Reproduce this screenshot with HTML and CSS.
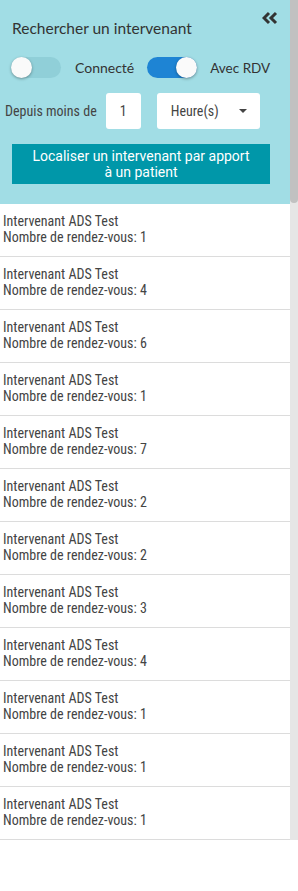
FILE: index.html
```html
<!DOCTYPE html>
<html lang="fr">
<head>
<meta charset="utf-8">
<link rel="stylesheet" href="styles.css">
</head>
<body>
<div class="panel">
  <div class="content">
    <div class="header">
      <div class="title-row">
        <div class="title">Rechercher un intervenant</div>
        <svg class="collapse" width="16" height="14" viewBox="0 0 16 14"><path d="M7 2 L2 7 L7 12 M14 2 L9 7 L14 12" fill="none" stroke="#333" stroke-width="3" stroke-linejoin="miter"/></svg>
      </div>
      <div class="toggle-row">
        <span class="switch"><span class="knob"></span></span>
        <span class="tlabel">Connecté</span>
        <span class="switch on"><span class="knob"></span></span>
        <span class="tlabel">Avec RDV</span>
      </div>
      <div class="since-row">
        <span class="since">Depuis moins de</span>
        <span class="num">1</span>
        <span class="select">Heure(s)<span class="caret"></span></span>
      </div>
      <button class="locate">Localiser un intervenant par apport<br>à un patient</button>
    </div>
    <ul class="list">
      <li><span>Intervenant ADS Test</span><span>Nombre de rendez-vous: 1</span></li>
      <li><span>Intervenant ADS Test</span><span>Nombre de rendez-vous: 4</span></li>
      <li><span>Intervenant ADS Test</span><span>Nombre de rendez-vous: 6</span></li>
      <li><span>Intervenant ADS Test</span><span>Nombre de rendez-vous: 1</span></li>
      <li><span>Intervenant ADS Test</span><span>Nombre de rendez-vous: 7</span></li>
      <li><span>Intervenant ADS Test</span><span>Nombre de rendez-vous: 2</span></li>
      <li><span>Intervenant ADS Test</span><span>Nombre de rendez-vous: 2</span></li>
      <li><span>Intervenant ADS Test</span><span>Nombre de rendez-vous: 3</span></li>
      <li><span>Intervenant ADS Test</span><span>Nombre de rendez-vous: 4</span></li>
      <li><span>Intervenant ADS Test</span><span>Nombre de rendez-vous: 1</span></li>
      <li><span>Intervenant ADS Test</span><span>Nombre de rendez-vous: 1</span></li>
      <li><span>Intervenant ADS Test</span><span>Nombre de rendez-vous: 1</span></li>
    </ul>
  </div>
  <div class="scrollbar"><div class="thumb"></div></div>
</div>
</body>
</html>
```

FILE: styles.css
```css
html, body {
  margin: 0;
  padding: 0;
  background: #ffffff;
}
.panel {
  width: 298px;
  height: 840px;
  display: flex;
  font-family: "Roboto Condensed", "Liberation Sans Narrow", Roboto, sans-serif;
  color: #333333;
}
.content {
  width: 290px;
  flex: none;
}
.scrollbar {
  width: 8px;
  flex: none;
  background: #e6e6e6;
  display: flex;
  flex-direction: column;
}
.thumb {
  height: 203px;
  background: #c1c1c1;
  border-radius: 0 0 4px 4px;
}
.header {
  background: #a1dde5;
  height: 204px;
  box-sizing: border-box;
  padding-top: 10px;
}
.title-row {
  display: flex;
  justify-content: space-between;
  align-items: flex-start;
  padding-left: 12px;
  padding-right: 12px;
}
.title {
  font-family: Lato, "Noto Sans", sans-serif;
  font-size: 15.5px;
  line-height: 20px;
  margin-top: 8px;
  color: #333333;
}
.collapse {
  display: block;
  margin-top: 1px;
}
.toggle-row {
  display: flex;
  align-items: center;
  margin-top: 19px;
  padding-left: 11px;
  height: 21px;
}
.switch {
  position: relative;
  width: 50px;
  height: 21px;
  border-radius: 11px;
  background: #90cfd8;
  flex: none;
}
.switch.on {
  background: #1e84d4;
}
.knob {
  position: absolute;
  top: 0;
  left: 0;
  width: 21px;
  height: 21px;
  border-radius: 50%;
  background: #fafafa;
  box-shadow: 0 1px 3px rgba(0,0,0,0.35);
}
.switch.on .knob {
  left: 29px;
}
.tlabel {
  font-family: Lato, "Noto Sans", sans-serif;
  font-size: 14px;
  margin-left: 14px;
  margin-right: 13px;
  color: #333333;
}
.tlabel:last-child {
  margin-left: 13px;
  font-size: 13.5px;
}
.since-row {
  display: flex;
  align-items: center;
  margin-top: 15px;
  padding-left: 5px;
  height: 36px;
}
.since {
  font-size: 14px;
  color: #444444;
}
.num {
  width: 35px;
  height: 36px;
  margin-left: 9px;
  background: #ffffff;
  border-radius: 3px;
  display: flex;
  align-items: center;
  justify-content: center;
  font-size: 14px;
  color: #444444;
}
.select {
  width: 103px;
  height: 36px;
  margin-left: 16px;
  background: #ffffff;
  border-radius: 3px;
  display: flex;
  align-items: center;
  box-sizing: border-box;
  padding-left: 14px;
  font-size: 14px;
  color: #444444;
  position: relative;
}
.caret {
  position: absolute;
  left: 82px;
  top: 16px;
  width: 0;
  height: 0;
  border-left: 4px solid transparent;
  border-right: 4px solid transparent;
  border-top: 4px solid #444444;
}
.locate {
  display: block;
  margin: 15px 0 0 12px;
  width: 258px;
  height: 40px;
  border: none;
  padding: 0;
  background: #0097a9;
  color: #ffffff;
  font-family: Roboto, "Liberation Sans", sans-serif;
  font-size: 14px;
  line-height: 16px;
}
.list {
  list-style: none;
  margin: 0;
  padding: 0;
}
.list li {
  display: flex;
  flex-direction: column;
  padding: 9px 0 11px 3px;
  border-bottom: 1px solid #dcdcdc;
  font-size: 14px;
  line-height: 16px;
  color: #444444;
}
```
